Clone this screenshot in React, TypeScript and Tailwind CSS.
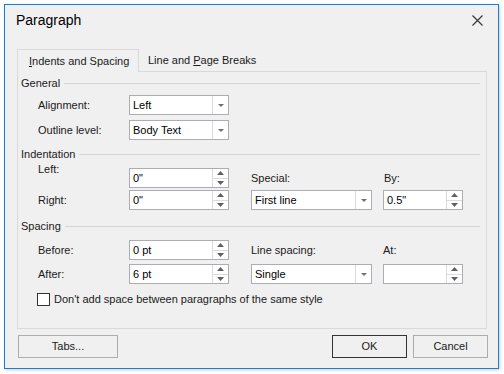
import React from "react";

function Up() {
  return (
    <svg width="7" height="4" viewBox="0 0 7 4">
      <path d="M0 4 L3.5 0 L7 4 Z" fill="#606060" />
    </svg>
  );
}
function Down() {
  return (
    <svg width="7" height="4" viewBox="0 0 7 4">
      <path d="M0 0 L3.5 4 L7 0 Z" fill="#606060" />
    </svg>
  );
}
function SmallDown() {
  return (
    <svg width="6" height="3" viewBox="0 0 6 3">
      <path d="M0 0 L3 3 L6 0 Z" fill="#707070" />
    </svg>
  );
}

function Combo({ w, value }: { w: string; value: string }) {
  return (
    <div className={`flex h-[20px] border border-[#abadb3] bg-white ${w}`}>
      <div className="flex flex-1 items-center pl-[3px] text-[#000]">{value}</div>
      <div className="flex w-[16px] items-center justify-center border-l border-[#dadada]">
        <SmallDown />
      </div>
    </div>
  );
}

function Spin({ w, value }: { w: string; value: string }) {
  return (
    <div className={`flex h-[20px] border border-[#abadb3] bg-white ${w}`}>
      <div className="flex flex-1 items-center pl-[3px] text-[#000]">{value}</div>
      <div className="flex w-[16px] flex-col border-l border-[#dadada]">
        <div className="flex flex-1 items-center justify-center border-b border-[#dadada]">
          <Up />
        </div>
        <div className="flex flex-1 items-center justify-center">
          <Down />
        </div>
      </div>
    </div>
  );
}

function Header({ text, cls }: { text: string; cls: string }) {
  return (
    <div className={`flex h-[14px] items-center gap-[4px] ${cls}`}>
      <span className="leading-none">{text}</span>
      <div className="h-px flex-1 bg-[#d5d5d5]" />
    </div>
  );
}

export default function App() {
  return (
    <div className="h-[374px] w-[504px] bg-white pl-[4px] pt-[4px] font-['Liberation_Sans',Arial,sans-serif] text-[11px] text-[#1a1a1a]">
      <div className="flex h-[365px] w-[495px] flex-col border border-[#1a7fd4] bg-[#f0f0f0] shadow-[1px_1px_3px_rgba(0,0,0,0.2)]">
        {/* title bar */}
        <div className="flex h-[31px] items-center justify-between pl-[11px] pr-[15px]">
          <span className="text-[14px] text-black">Paragraph</span>
          <svg width="11" height="11" viewBox="0 0 11 11">
            <path d="M0.5 0.5 L10.5 10.5 M10.5 0.5 L0.5 10.5" stroke="#333" strokeWidth="1.1" />
          </svg>
        </div>

        <div className="ml-[12px] mt-[13px] flex w-[470px] flex-col">
          {/* tabs */}
          <div className="flex h-[22px] items-stretch">
            <div className="relative z-10 -mb-px flex w-[122px] items-center border-x border-t border-[#d9d9d9] bg-[#f0f0f0] pl-[11px]">
              <span>
                <span className="underline">I</span>ndents and Spacing
              </span>
            </div>
            <div className="flex items-center pl-[9px]">
              <span>
                Line and <span className="underline">P</span>age Breaks
              </span>
            </div>
          </div>

          {/* panel */}
          <div className="flex h-[258px] flex-col border border-[#d9d9d9] pl-[3px] pr-[6px]">
            <Header text="General" cls="mt-[4px]" />
            <div className="mt-[5px] flex h-[20px] items-center pl-[17px]">
              <span className="w-[91px]">Alignment:</span>
              <Combo w="w-[100px]" value="Left" />
            </div>
            <div className="mt-[5px] flex h-[20px] items-center pl-[17px]">
              <span className="w-[91px]">Outline level:</span>
              <Combo w="w-[100px]" value="Body Text" />
            </div>

            <Header text="Indentation" cls="mt-[7px]" />
            <div className="mt-[7px] flex h-[20px] items-center pl-[17px]">
              <span className="mb-[17px] w-[91px]">Left:</span>
              <Spin w="w-[100px]" value={'0"'} />
              <span className="ml-[22px] w-[132px]">Special:</span>
              <span className="pl-[1px]">By:</span>
            </div>
            <div className="mt-[2px] flex h-[20px] items-center pl-[17px]">
              <span className="w-[91px]">Right:</span>
              <Spin w="w-[100px]" value={'0"'} />
              <div className="ml-[22px]">
                <Combo w="w-[121px]" value="First line" />
              </div>
              <div className="ml-[11px]">
                <Spin w="w-[80px]" value={'0.5"'} />
              </div>
            </div>

            <Header text="Spacing" cls="mt-[9px]" />
            <div className="mt-[7px] flex h-[20px] items-center pl-[17px]">
              <span className="w-[91px]">Before:</span>
              <Spin w="w-[100px]" value="0 pt" />
              <span className="ml-[22px] w-[132px]">Line spacing:</span>
              <span>At:</span>
            </div>
            <div className="mt-[4px] flex h-[20px] items-center pl-[17px]">
              <span className="w-[91px]">After:</span>
              <Spin w="w-[100px]" value="6 pt" />
              <div className="ml-[22px]">
                <Combo w="w-[121px]" value="Single" />
              </div>
              <div className="ml-[11px]">
                <Spin w="w-[80px]" value="" />
              </div>
            </div>

            <div className="mt-[8px] flex h-[15px] items-center gap-[4px] pl-[16px]">
              <div className="h-[13px] w-[13px] border border-[#333] bg-white" />
              <span>Don't add space between paragraphs of the same style</span>
            </div>
          </div>

          {/* buttons */}
          <div className="mt-[6px] flex items-center">
            <button className="ml-[1px] flex h-[23px] w-[100px] items-center justify-center border border-[#adadad] bg-[#f0f0f0]">
              Tabs...
            </button>
            <div className="flex-1" />
            <button className="flex h-[23px] w-[75px] items-center justify-center border border-[#333] bg-[#f0f0f0]">
              OK
            </button>
            <button className="ml-[6px] -mr-[1px] flex h-[23px] w-[75px] items-center justify-center border border-[#adadad] bg-[#f0f0f0]">
              Cancel
            </button>
          </div>
        </div>
      </div>
    </div>
  );
}
